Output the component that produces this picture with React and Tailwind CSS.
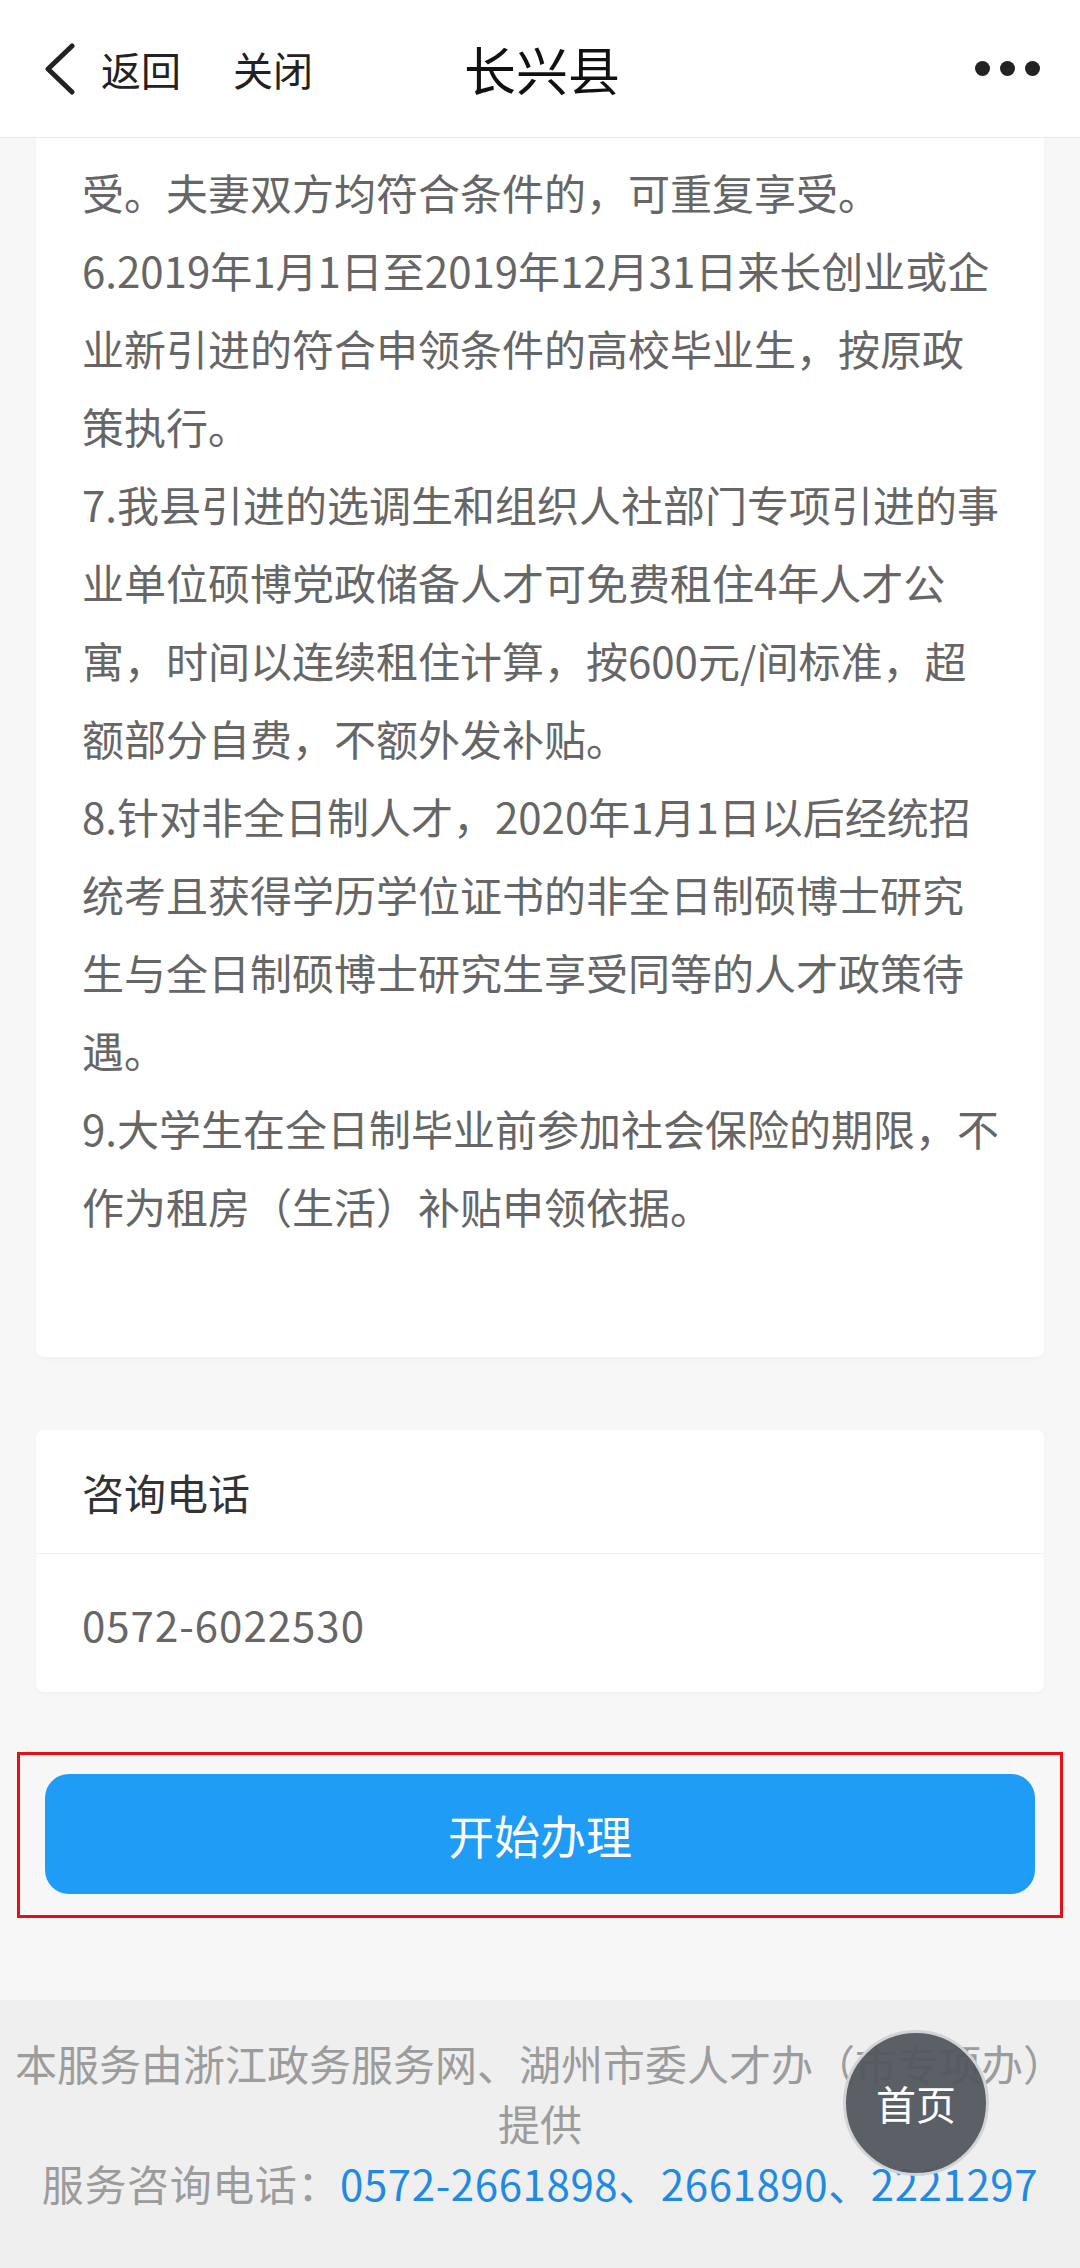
import React from 'react';

const FONT = { fontFamily: '"Noto Sans CJK SC", "Noto Sans", sans-serif' };

const POLICY_LINES = [
  '受。夫妻双方均符合条件的，可重复享受。',
  '6.2019年1月1日至2019年12月31日来长创业或企',
  '业新引进的符合申领条件的高校毕业生，按原政',
  '策执行。',
  '7.我县引进的选调生和组织人社部门专项引进的事',
  '业单位硕博党政储备人才可免费租住4年人才公',
  '寓，时间以连续租住计算，按600元/间标准，超',
  '额部分自费，不额外发补贴。',
  '8.针对非全日制人才，2020年1月1日以后经统招',
  '统考且获得学历学位证书的非全日制硕博士研究',
  '生与全日制硕博士研究生享受同等的人才政策待',
  '遇。',
  '9.大学生在全日制毕业前参加社会保险的期限，不',
  '作为租房（生活）补贴申领依据。',
];

function BackIcon() {
  return (
    <svg width="32" height="52" viewBox="0 0 32 52" fill="none">
      <path d="M28 3 L4 26 L28 49" stroke="#222" strokeWidth="5" strokeLinecap="round" strokeLinejoin="round" />
    </svg>
  );
}

function Header() {
  return (
    <header className="h-[138px] bg-white border-b border-[#e8e8e8] grid grid-cols-[1fr_auto_1fr] items-center pl-[44px] pr-[40px]">
      <div className="flex items-center">
        <BackIcon />
        <span className="ml-[25px] text-[40px] text-[#222] leading-none">返回</span>
        <span className="ml-[52px] text-[40px] text-[#222] leading-none">关闭</span>
      </div>
      <h1 className="m-0 text-[52px] font-normal text-[#111] leading-none">长兴县</h1>
      <div className="flex justify-end gap-[10px]">
        <span className="w-[15px] h-[15px] rounded-full bg-[#222]" />
        <span className="w-[15px] h-[15px] rounded-full bg-[#222]" />
        <span className="w-[15px] h-[15px] rounded-full bg-[#222]" />
      </div>
    </header>
  );
}

function PolicyCard() {
  return (
    <section className="mx-[36px] bg-white rounded-b-[8px] shadow-[0_2px_4px_rgba(0,0,0,0.03)] pt-[15px] pb-[112px] pl-[46px] pr-[30px]">
      <p className="m-0 text-[42px] leading-[78px] text-[#666] whitespace-nowrap">
        {POLICY_LINES.map((line, i) => (
          <span key={i} className="block">{line}</span>
        ))}
      </p>
    </section>
  );
}

function ContactCard() {
  return (
    <section className="mx-[36px] mt-[73px] bg-white rounded-[8px] shadow-[0_2px_4px_rgba(0,0,0,0.03)]">
      <div className="h-[123px] flex items-center px-[46px] text-[42px] text-[#333]">咨询电话</div>
      <div className="h-px bg-[#f0f0f0]" />
      <div className="h-[138px] flex items-center px-[46px] text-[42px] text-[#666] tracking-[1px]">0572-6022530</div>
    </section>
  );
}

export default function App() {
  return (
    <div className="relative w-[1080px] min-h-[2268px] bg-[#f7f7f7] flex flex-col" style={FONT}>
      <Header />
      <PolicyCard />
      <ContactCard />

      {/* highlighted action */}
      <div className="mx-[17px] mt-[60px] border-[3px] border-[#e60f16] pt-[19px] pb-[21px] px-[25px]">
        <button className="w-full h-[120px] rounded-[24px] bg-[#1f9cf5] text-white text-[46px] flex items-center justify-center">
          开始办理
        </button>
      </div>

      <footer className="mt-[82px] h-[269px] bg-[#efefef] pt-[33px] text-center text-[42px] leading-[60px] text-[#9c9c9c] whitespace-nowrap">
        <div>本服务由浙江政务服务网、湖州市委人才办（市专项办）</div>
        <div>提供</div>
        <div className="tracking-[0.6px]">
          服务咨询电话：<span className="text-[#1f8ae3]">0572-2661898、2661890、2221297</span>
        </div>
      </footer>

      <button className="absolute left-[843px] top-[2030px] w-[146px] h-[146px] rounded-full bg-[#52565e]/95 border-[3px] border-[#d2d3d6] text-white text-[40px] flex items-center justify-center">
        首页
      </button>
    </div>
  );
}
